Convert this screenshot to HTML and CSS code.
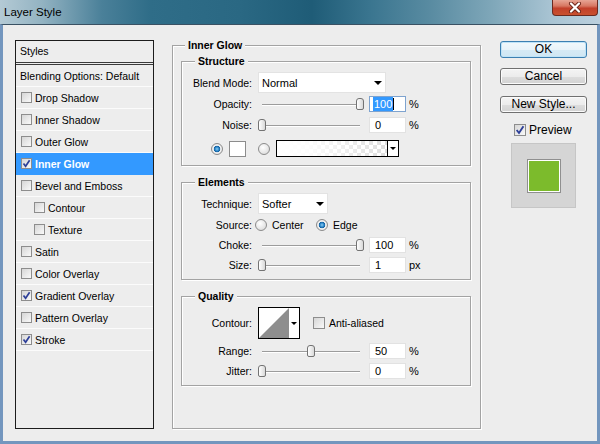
FILE: index.html
```html
<!DOCTYPE html>
<html lang="en">
<head>
    <meta charset="UTF-8">
    <title>Layer Style</title>
    <link rel="stylesheet" href="styles.css">
</head>
<body>
<div class="window">
    <div class="titlebar">
        <span class="title">Layer Style</span>
        <div class="close-btn">
            <svg width="14" height="11" viewBox="0 0 14 11">
                <path d="M3 1.5 L11 9.5 M11 1.5 L3 9.5" stroke="#6b2418" stroke-width="4" stroke-linecap="round"/>
                <path d="M3 1.5 L11 9.5 M11 1.5 L3 9.5" stroke="#fff" stroke-width="2.2" stroke-linecap="round"/>
            </svg>
        </div>
    </div>

    <div class="frame">
        <!-- styles list -->
        <div class="styles-list">
            <div class="list-head">Styles</div>
            <div class="list-row plain">Blending Options: Default</div>
            <div class="list-row"><span class="check"></span>Drop Shadow</div>
            <div class="list-row"><span class="check"></span>Inner Shadow</div>
            <div class="list-row"><span class="check"></span>Outer Glow</div>
            <div class="list-row selected"><span class="check"><svg width="9" height="9" viewBox="0 0 9 9"><path d="M1.5 4.5 L3.6 7.2 L7.6 1.2" fill="none" stroke="#2d3f98" stroke-width="1.7"/></svg></span>Inner Glow</div>
            <div class="list-row"><span class="check"></span>Bevel and Emboss</div>
            <div class="list-row sub"><span class="check"></span>Contour</div>
            <div class="list-row sub"><span class="check"></span>Texture</div>
            <div class="list-row"><span class="check"></span>Satin</div>
            <div class="list-row"><span class="check"></span>Color Overlay</div>
            <div class="list-row"><span class="check"><svg width="9" height="9" viewBox="0 0 9 9"><path d="M1.5 4.5 L3.6 7.2 L7.6 1.2" fill="none" stroke="#2d3f98" stroke-width="1.7"/></svg></span>Gradient Overlay</div>
            <div class="list-row"><span class="check"></span>Pattern Overlay</div>
            <div class="list-row"><span class="check"><svg width="9" height="9" viewBox="0 0 9 9"><path d="M1.5 4.5 L3.6 7.2 L7.6 1.2" fill="none" stroke="#2d3f98" stroke-width="1.7"/></svg></span>Stroke</div>
        </div>

        <!-- settings -->
        <div class="group outer">
            <div class="legend legend-outer">Inner Glow</div>

            <div class="group sub-group structure">
                <div class="legend">Structure</div>
                <div class="row row-blend">
                    <span class="lbl">Blend Mode:</span>
                    <div class="select select-wide">Normal<span class="arrow"></span></div>
                </div>
                <div class="row">
                    <span class="lbl">Opacity:</span>
                    <div class="slider"><div class="rail"><span class="thumb" style="left: 100%"></span></div></div>
                    <div class="field focus"><span class="sel">100</span><span class="caret"></span></div>
                    <span class="unit">%</span>
                </div>
                <div class="row">
                    <span class="lbl">Noise:</span>
                    <div class="slider"><div class="rail"><span class="thumb" style="left: 0%"></span></div></div>
                    <div class="field">0</div>
                    <span class="unit">%</span>
                </div>
                <div class="row row-color">
                    <span class="radio on"></span>
                    <span class="swatch"></span>
                    <span class="radio radio-grad"></span>
                    <div class="gradient-box">
                        <div class="grad"></div>
                        <div class="grad-arrow"><span class="arrow"></span></div>
                    </div>
                </div>
            </div>

            <div class="group sub-group elements">
                <div class="legend">Elements</div>
                <div class="row row-technique">
                    <span class="lbl">Technique:</span>
                    <div class="select select-short">Softer<span class="arrow"></span></div>
                </div>
                <div class="row row-source">
                    <span class="lbl tight">Source:</span>
                    <label class="opt"><span class="radio"></span>Center</label>
                    <label class="opt"><span class="radio on"></span>Edge</label>
                </div>
                <div class="row row-choke">
                    <span class="lbl">Choke:</span>
                    <div class="slider"><div class="rail"><span class="thumb" style="left: 100%"></span></div></div>
                    <div class="field">100</div>
                    <span class="unit">%</span>
                </div>
                <div class="row">
                    <span class="lbl">Size:</span>
                    <div class="slider"><div class="rail"><span class="thumb" style="left: 0%"></span></div></div>
                    <div class="field">1</div>
                    <span class="unit">px</span>
                </div>
            </div>

            <div class="group sub-group quality">
                <div class="legend">Quality</div>
                <div class="row row-contour">
                    <span class="lbl">Contour:</span>
                    <div class="contour">
                        <svg width="30" height="30" viewBox="0 0 30 30"><polygon points="0,30 30,0 30,30" fill="#8e8e8e"/></svg>
                        <div class="contour-arrow"><span class="arrow"></span></div>
                    </div>
                    <label class="anti"><span class="check big"></span>Anti-aliased</label>
                </div>
                <div class="row row-range">
                    <span class="lbl">Range:</span>
                    <div class="slider"><div class="rail"><span class="thumb" style="left: 50%"></span></div></div>
                    <div class="field">50</div>
                    <span class="unit">%</span>
                </div>
                <div class="row row-jitter">
                    <span class="lbl">Jitter:</span>
                    <div class="slider"><div class="rail"><span class="thumb" style="left: 0%"></span></div></div>
                    <div class="field">0</div>
                    <span class="unit">%</span>
                </div>
            </div>
        </div>

        <!-- buttons -->
        <div class="actions">
            <button class="btn btn-default">OK</button>
            <button class="btn">Cancel</button>
            <button class="btn btn-new">New Style...</button>
            <label class="preview-toggle"><span class="check big"><svg width="10" height="10" viewBox="0 0 9 9"><path d="M1.5 4.5 L3.6 7.2 L7.6 1.2" fill="none" stroke="#2d3f98" stroke-width="1.7"/></svg></span>Preview</label>
            <div class="preview-box"><div class="preview-swatch"></div></div>
        </div>
    </div>
</div>
</body>
</html>
```

FILE: styles.css
```css
body {
    margin: 0;
    font-family: "Liberation Sans", Arial, sans-serif;
    font-size: 10.5px;
    color: #000;
    background: #ededed;
}
.window {
    width: 600px;
    height: 444px;
    display: flex;
    flex-direction: column;
}

/* title bar */
.titlebar {
    height: 24px;
    flex: none;
    display: flex;
    justify-content: space-between;
    background: linear-gradient(90deg, #b4cad5 0%, #93b3c2 7%, #4a8099 17%, #2f6d88 25%, #2a6883 40%, #1f5c77 52%, #3b7690 62%, #5a8ca2 72%, #7fa7b9 82%, #a9c4d3 92%, #bcd0de 100%);
}
.title {
    font-size: 11.5px;
    padding: 5px 0 0 4px;
    line-height: 14px;
}
.close-btn {
    width: 44px;
    height: 15px;
    margin-right: 2px;
    border: 1px solid #6a2a20;
    border-top: none;
    border-radius: 0 0 4px 4px;
    background: linear-gradient(#e7a595 0%, #d77762 40%, #c2402a 55%, #c9512f 100%);
    display: flex;
    align-items: center;
    justify-content: center;
}

/* dialog body */
.frame {
    flex: 1;
    background: #ededed;
    border-top: 1px solid #3a5163;
    border-left: 3px solid #7396be;
    border-right: 3px solid #7396be;
    border-bottom: 3px solid #7396be;
    display: flex;
    align-items: flex-start;
    padding: 15px 0 0 12px;
}

/* styles list */
.styles-list {
    width: 139px;
    height: 389px;
    box-sizing: border-box;
    border: 1px solid #1c1c1c;
    flex: none;
}
.list-head {
    height: 21px;
    line-height: 21px;
    padding-left: 4px;
    border-bottom: 3px double #3a3a3a;
}
.list-row {
    height: 21px;
    border-bottom: 1px solid #fbfbfb;
    display: flex;
    align-items: center;
    padding-left: 5px;
}
.list-row.plain {
    padding-left: 4px;
}
.list-row.sub {
    padding-left: 18px;
}
.list-row.selected {
    background: #3399ff;
    border-bottom-color: #3399ff;
    color: #fff;
    font-weight: bold;
}

.check {
    width: 11px;
    height: 11px;
    box-sizing: border-box;
    border: 1px solid #8d8d8d;
    background: linear-gradient(135deg, #d6d6d6, #f9f9f9);
    display: inline-flex;
    align-items: center;
    justify-content: center;
    flex: none;
    margin-right: 3px;
}
.check.big {
    width: 12px;
    height: 12px;
    margin-right: 4px;
}

/* group boxes */
.group {
    border: 1px solid #a3a3a3;
    box-shadow: inset 1px 1px 0 #fff, 1px 1px 0 #fff;
    box-sizing: border-box;
}
.outer {
    width: 309px;
    height: 384px;
    margin: 5px 0 0 18px;
    padding: 0 9px 0 8px;
    flex: none;
}
.legend {
    display: table;
    margin: -7px 0 0 13px;
    padding: 0 3px;
    line-height: 13px;
    background: #ededed;
    font-weight: bold;
}
.legend-outer {
    margin-left: 4px;
}
.sub-group {
    width: 290px;
}
.structure {
    height: 105px;
    margin-top: 9px;
}
.elements {
    height: 98px;
    margin-top: 16px;
}
.quality {
    height: 90px;
    margin-top: 16px;
}

.row {
    height: 21px;
    display: flex;
    align-items: center;
}
.lbl {
    width: 70px;
    margin-right: 6px;
    text-align: right;
    flex: none;
}
.lbl.tight {
    margin-right: 3px;
}
.row-blend, .row-technique, .row-contour {
    margin-top: 4px;
}
.row-color {
    margin-top: 3px;
    padding-left: 29px;
}
.row-source {
    height: 22px;
}
.row-choke {
    height: 18px;
}
.row-contour {
    height: 32px;
}
.row-range {
    margin-top: 1px;
}
.row-jitter {
    height: 19px;
}

/* dropdowns */
.select {
    height: 21px;
    box-sizing: border-box;
    background: #fff;
    border: 1px solid #e3e3e3;
    display: flex;
    align-items: center;
    justify-content: space-between;
    padding: 0 3px 0 3px;
    font-size: 11px;
}
.select-wide {
    width: 128px;
}
.select-short {
    width: 70px;
}
.arrow {
    width: 0;
    height: 0;
    border-left: 4px solid transparent;
    border-right: 4px solid transparent;
    border-top: 4px solid #000;
}

/* sliders */
.slider {
    width: 108px;
    height: 14px;
    flex: none;
}
.rail {
    position: relative;
    width: 98px;
    height: 14px;
    margin-left: 4px;
    background:
        linear-gradient(#9c9c9c, #9c9c9c) 0 7px / 100% 1px no-repeat,
        linear-gradient(#fff, #fff) 0 8px / 100% 1px no-repeat;
}
.thumb {
    position: absolute;
    top: 1px;
    width: 8px;
    height: 12px;
    margin-left: -4px;
    box-sizing: border-box;
    border: 1px solid #737373;
    border-radius: 3px 3px 2px 2px;
    background: linear-gradient(90deg, #ffffff, #d9d9d9);
}
.field {
    width: 37px;
    height: 16px;
    margin-left: 3px;
    box-sizing: border-box;
    background: #fff;
    border: 1px solid #e2e2e2;
    padding-left: 5px;
    line-height: 14px;
    font-size: 11px;
    display: flex;
    align-items: center;
}
.field.focus {
    border-color: #7ea3cf;
    padding-left: 3px;
}
.sel {
    background: #3399ff;
    color: #fff;
    padding: 0 1px;
}
.caret {
    width: 1px;
    height: 12px;
    background: #000;
}
.unit {
    margin-left: 3px;
    font-size: 11px;
}

/* radios and colour pickers */
.radio {
    width: 12px;
    height: 12px;
    box-sizing: border-box;
    border-radius: 50%;
    border: 1px solid #8b8b8b;
    background: radial-gradient(circle at 40% 35%, #ffffff, #d5d5d5);
    flex: none;
}
.radio.on {
    background: radial-gradient(circle, #8fd0f5 0, #2a85c8 2px, #15609e 3px, #f4f4f4 3.6px, #d8d8d8 100%);
}
.swatch {
    width: 17px;
    height: 16px;
    margin-left: 6px;
    box-sizing: border-box;
    background: #fff;
    border: 1px solid #8c8c8c;
}
.radio-grad {
    margin-left: 12px;
}
.gradient-box {
    width: 123px;
    height: 17px;
    margin-left: 6px;
    box-sizing: border-box;
    border: 1px solid #000;
    display: flex;
}
.grad {
    flex: 1;
    background:
        linear-gradient(90deg, #fff 0%, rgba(255, 255, 255, 0.9) 30%, rgba(255, 255, 255, 0) 100%),
        conic-gradient(#dedede 25%, #fff 0 50%, #dedede 0 75%, #fff 0) 0 0 / 8px 8px;
}
.grad-arrow, .contour-arrow {
    width: 10px;
    border-left: 1px solid #000;
    background: #fff;
    display: flex;
    align-items: center;
    justify-content: center;
}
.grad-arrow .arrow, .contour-arrow .arrow {
    border-left-width: 3px;
    border-right-width: 3px;
    border-top-width: 3px;
}

.opt {
    width: 61px;
    display: flex;
    align-items: center;
    gap: 5px;
}

.contour {
    width: 42px;
    height: 32px;
    box-sizing: border-box;
    border: 1px solid #000;
    background: #fff;
    display: flex;
}
.contour svg {
    display: block;
}
.contour-arrow {
    border-left: none;
}
.anti {
    margin-left: 13px;
    display: flex;
    align-items: center;
}

/* right column */
.actions {
    width: 87px;
    margin: 1px 0 0 19px;
    display: flex;
    flex-direction: column;
    flex: none;
}
.btn {
    height: 17px;
    margin-bottom: 10px;
    padding: 0;
    font-family: "Liberation Sans", Arial, sans-serif;
    font-size: 12px;
    line-height: 15px;
    color: #000;
    border: 1px solid #707070;
    border-radius: 3px;
    background: linear-gradient(#f4f4f4 0%, #ececec 50%, #dedede 50%, #d2d2d2 100%);
    box-shadow: inset 0 0 0 1px #fbfbfb;
}
.btn-default {
    border-color: #3c7fb1;
    box-shadow: inset 0 0 0 1px #bfe3f7;
    background: linear-gradient(#f2f8fb 0%, #e8f3f9 50%, #d6eaf5 50%, #cfe6f3 100%);
}
.btn-new {
    margin-top: 1px;
}
.preview-toggle {
    height: 14px;
    margin-top: 0;
    padding-left: 14px;
    display: flex;
    align-items: center;
    font-size: 12px;
}
.preview-toggle .check {
    margin-right: 3px;
}
.preview-box {
    width: 65px;
    height: 65px;
    margin: 6px 0 0 11px;
    box-sizing: border-box;
    background: #d5d5d5;
    border: 1px solid #c6c6c6;
    display: flex;
    align-items: center;
    justify-content: center;
}
.preview-swatch {
    width: 32px;
    height: 32px;
    box-sizing: border-box;
    background: #7cbb2c;
    border: 1px solid #fff;
    box-shadow: 0 0 0 1px #8f8f8f;
}
```
